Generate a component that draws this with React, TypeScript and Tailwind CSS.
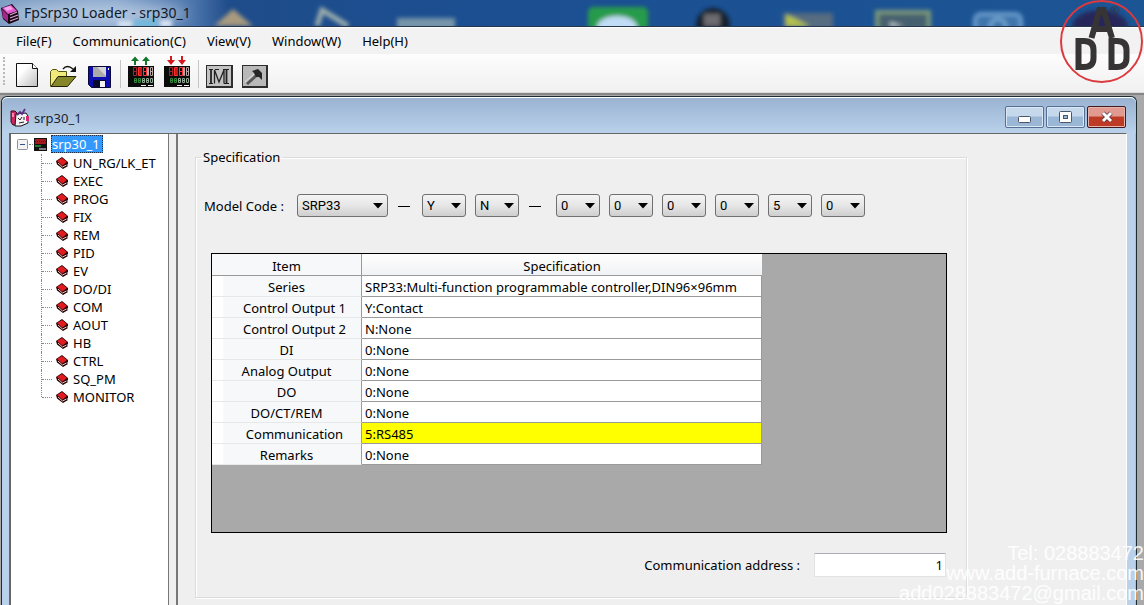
import { ReactNode } from "react";

const menus = ["File(F)", "Communication(C)", "View(V)", "Window(W)", "Help(H)"];

const treeItems = [
  "UN_RG/LK_ET", "EXEC", "PROG", "FIX", "REM", "PID", "EV",
  "DO/DI", "COM", "AOUT", "HB", "CTRL", "SQ_PM", "MONITOR",
];

const rows = [
  { item: "Series", value: "SRP33:Multi-function programmable controller,DIN96×96mm" },
  { item: "Control Output 1", value: "Y:Contact", indent: true },
  { item: "Control Output 2", value: "N:None", indent: true },
  { item: "DI", value: "0:None" },
  { item: "Analog Output", value: "0:None" },
  { item: "DO", value: "0:None" },
  { item: "DO/CT/REM", value: "0:None" },
  { item: "Communication", value: "5:RS485", indent: true, marked: true },
  { item: "Remarks", value: "0:None" },
];

function AppIcon() {
  return (
    <svg width="20" height="22" viewBox="0 0 20 22" className="shrink-0">
      <path d="M1 6 L12 2 L18 9 L19 18 L9 22 L3 17Z" fill="#160713" />
      <path d="M2 6 L11 3 L17 9 L8 12Z" fill="#e45bd0" />
      <path d="M4 6 L10 4 L13 7 L7 9Z" fill="#f7a5ea" />
      <path d="M2 7 L8 13 L8 20 L3 16Z" fill="#a4258c" />
      <path d="M10 13l7-3M10 16l8-3M10 19l8-3" stroke="#d9a7d4" strokeWidth="1.2" />
    </svg>
  );
}

function DesktopBackdrop() {
  return (
    <svg className="absolute inset-0 h-full w-full" viewBox="0 0 1144 26" preserveAspectRatio="xMinYMin slice">
      <defs>
        <linearGradient id="sky" x1="0" x2="1" y1="0" y2="0">
          <stop offset="0" stopColor="#7d9cc2" />
          <stop offset="0.1" stopColor="#86a5cb" />
          <stop offset="0.17" stopColor="#4b74ab" />
          <stop offset="0.2" stopColor="#1f4c8a" />
          <stop offset="0.45" stopColor="#1b4f92" />
          <stop offset="1" stopColor="#1c5594" />
        </linearGradient>
        <filter id="soft" x="-20%" y="-50%" width="140%" height="200%">
          <feGaussianBlur stdDeviation="2" />
        </filter>
        <filter id="glow" x="-20%" y="-100%" width="140%" height="300%">
          <feGaussianBlur stdDeviation="7" />
        </filter>
      </defs>
      <rect width="1144" height="26" fill="url(#sky)" />
      <ellipse cx="95" cy="14" rx="92" ry="10" fill="#c4d4e8" opacity="0.75" filter="url(#glow)" />
      <g filter="url(#soft)">
        <path d="M134 20h24v8h-24z" fill="#72b9dc" />
        <path d="M118 21h14v6h-14zM160 20h12v7h-12z" fill="#dce8f4" />
        <path d="M214 26l19-17 20 17z" fill="#a79a7e" />
        <path d="M317 26l5-16 26 16" fill="none" stroke="#9eb0ad" strokeWidth="5" />
        <rect x="397" y="18" width="58" height="12" fill="#7795a9" />
        <rect x="588" y="7" width="60" height="24" rx="5" fill="#259b4b" />
        <ellipse cx="617" cy="27" rx="20" ry="11" fill="#c1dcf5" />
        <circle cx="713" cy="25" r="17" fill="#15202f" />
        <path d="M704 14h16v12h-16z" fill="#6d6c70" />
        <rect x="783" y="13" width="50" height="16" fill="#566c80" />
        <path d="M786 14l24 12h-24z" fill="#b4c24a" />
        <rect x="877" y="12" width="52" height="20" fill="#46606f" stroke="#7d9a7c" strokeWidth="4" />
        <path d="M890 22l14 4h-14z" fill="#c2ccd0" />
        <rect x="975" y="14" width="46" height="22" rx="6" fill="#3d74ac" stroke="#6b9ccb" strokeWidth="4" />
        <circle cx="998" cy="27" r="8" fill="none" stroke="#7caad4" strokeWidth="3" />
        <ellipse cx="1100" cy="27" rx="28" ry="17" fill="#26285a" />
      </g>
    </svg>
  );
}

function NewIcon() {
  return (
    <svg width="24" height="26" viewBox="0 0 24 26">
      <defs>
        <linearGradient id="page" x1="0" x2="1" y1="0" y2="1">
          <stop offset="0.3" stopColor="#fff" />
          <stop offset="1" stopColor="#bdbdbd" />
        </linearGradient>
      </defs>
      <path d="M1.500 1.500H17.500L22.500 6.500V24.500H1.500Z" fill="url(#page)" stroke="#111" />
      <path d="M17.500 1.500V6.500H22.500" fill="#fff" stroke="#111" />
    </svg>
  );
}

function OpenIcon() {
  return (
    <svg width="28" height="24" viewBox="0 0 28 24">
      <path d="M1.500 22.500V7.500L3.500 5.500H7.500L9.500 7.500H17.500V12.500" fill="#f0ea7c" stroke="#55550f" />
      <path d="M2 22.500L9 12.500H27L18.500 22.500Z" fill="#86862a" stroke="#222208" />
      <path d="M14 5Q18 0 24 5" fill="none" stroke="#111" strokeWidth="1.300" />
      <path d="M27 2V8H21Z" fill="#111" />
    </svg>
  );
}

function SaveIcon() {
  return (
    <svg width="23" height="22" viewBox="0 0 23 22">
      <path d="M0.500 0.500H22.500V21.500H3.500L0.500 18.500Z" fill="#0d0db0" stroke="#08083c" />
      <rect x="5" y="1" width="13" height="10" fill="#a9a9a9" />
      <path d="M9 1h9v9z" fill="#d4d4d4" />
      <rect x="5" y="14" width="13" height="8" fill="#0a0a2c" />
      <rect x="12" y="15" width="5" height="6" fill="#f2f2f2" />
      <path d="M20 2h1v2h-1z" fill="#fff" />
    </svg>
  );
}

function Digits({ x, y, color }: { x: number; y: number; color: string }) {
  return <path d={`M${x} ${y}h3v8h-3zM${x} ${y + 4}h3`} fill="none" stroke={color} />;
}

function DeviceIcon({ up }: { up: boolean }) {
  const arrow = up ? "M0 5L4 0.500L8 5H5V9H3V5Z" : "M3 0H5V4H8L4 9L0 4H3Z";
  return (
    <svg width="27" height="32" viewBox="0 0 27 32">
      <path d={arrow} transform="translate(3 0)" fill={up ? "#11772b" : "#d6171f"} />
      <path d={arrow} transform="translate(14 0)" fill={up ? "#11772b" : "#d6171f"} />
      <rect y="10" width="26" height="21" fill="#0b0b0b" />
      <Digits x={5.5} y={11.5} color="#a3262a" />
      <Digits x={10.5} y={11.5} color="#ff3434" />
      <Digits x={15.5} y={11.5} color="#ff3434" />
      <path d="M11 12h3v7h-3z" fill="#c8161a" />
      <path d="M19.500 11.500h1v8h-1zM22.500 11.500h2v8h-2zM22.500 15.500h2" fill="none" stroke="#b9a6a6" />
      <path d="M6.500 22.500h2v4h-2zM6.500 24.500h2M10.500 22.500h2v4h-2zM10.500 24.500h2" fill="none" stroke="#2d8a3b" />
      <path d="M14.500 22.500h2v4h-2zM14.500 24.500h2M18.500 22.500h2v4h-2zM18.500 24.500h2M22.500 22.500h2v4h-2z" fill="none" stroke="#8fa893" />
      <path d="M13 29.500h5M20 29.500h5" stroke="#eee" />
    </svg>
  );
}

function MonitorIcon() {
  return (
    <svg width="27" height="23" viewBox="0 0 27 23">
      <rect width="27" height="23" fill="#2e2e2e" />
      <rect x="1" y="1" width="24" height="20" fill="#c3c3c3" />
      <path d="M3 4.500h4M9 4.500h4M17 4.500h6M3 18.500h4M18 18.500h5" stroke="#222" />
      <path d="M5 4V18.500M20.500 4V18.500" stroke="#222" strokeWidth="1.800" />
      <path d="M8.500 18.500V5L13 17L18 5V18.500" fill="none" stroke="#222" strokeWidth="1.300" />
    </svg>
  );
}

function ToolIcon() {
  return (
    <svg width="26" height="23" viewBox="0 0 26 23">
      <rect width="26" height="23" fill="#2e2e2e" />
      <rect x="1" y="1" width="23" height="20" fill="#b9b9b9" />
      <path d="M4 18L14 9L16 11L6 20Z" fill="#555" />
      <path d="M10 6L16 4L20 8V15L17 12L14 12L12 8Z" fill="#262626" />
      <path d="M3 17L12 9" stroke="#e4e4e4" />
    </svg>
  );
}

function DocIcon() {
  return (
    <svg width="20" height="20" viewBox="0 0 20 20" className="shrink-0">
      <path d="M1 3H5L7 5V17L3 17L1 14Z" fill="#cf2560" stroke="#3a0b1b" />
      <path d="M6 6L16 5L18 8V15L11 18L5 18Z" fill="#f4f1f4" stroke="#151015" />
      <path d="M7 7L10 4L12 6L15 1" fill="none" stroke="#5c2c86" strokeWidth="1.800" />
      <path d="M8 10l2 2 2-3M9 15l5-1M14 9v3" stroke="#222" fill="none" />
      <path d="M16 8h3v5h-3z" fill="#d62a78" />
      <path d="M2 5h2v4H2z" fill="#f08ab0" />
    </svg>
  );
}

function BookIcon() {
  return (
    <svg width="13" height="12" viewBox="0 0 13 12" className="shrink-0">
      <path d="M0 4L6 0L12 5V7L11 8L12 9L7 12L1 7.500Z" fill="#250505" />
      <path d="M1 4L6 1L11 5L6.500 8.500Z" fill="#e01c21" />
      <path d="M2 6L6.500 10L10.500 8" fill="none" stroke="#f2c4c4" />
    </svg>
  );
}

function TreeDeviceIcon() {
  return (
    <svg width="13" height="13" viewBox="0 0 13 13" className="shrink-0">
      <rect width="13" height="13" fill="#111" />
      <rect x="1" y="1" width="11" height="5" fill="#a51a1c" />
      <path d="M1 3.500h11" stroke="#5a0c0c" strokeDasharray="1 1" />
      <path d="M1 8h6" stroke="#1c7a2c" strokeWidth="2" />
      <path d="M5 11h7" stroke="#eee" />
    </svg>
  );
}

function CodeSelect({ id, label, value, className }: { id: string; label?: string; value: string; className: string }) {
  return (
    <div className={`relative h-[23px] shrink-0 ${className}`}>
      <select
        id={id}
        aria-label={label}
        defaultValue={value}
        className="h-full w-full appearance-none rounded-[3px] border border-[#707070] bg-linear-to-b from-[#f4f4f4] via-[#e6e6e6] to-[#cfcfcf] pl-1 font-[Roboto,sans-serif] text-[13px] leading-5 text-black"
      >
        <option>{value}</option>
      </select>
      <svg width="10" height="6" viewBox="0 0 10 6" className="pointer-events-none absolute top-[9px] right-[5px]">
        <path d="M0 0H10L5 5.500Z" fill="#000" />
      </svg>
    </div>
  );
}

function ToolButton({ label, children }: { label: string; children: ReactNode }) {
  return (
    <button aria-label={label} className="flex w-9 items-end justify-center">
      {children}
    </button>
  );
}

function Dash() {
  return <span className="mt-px mr-3 ml-[10px] h-px w-3 shrink-0 bg-black" />;
}

function CompanyMark() {
  return (
    <svg width="84" height="84" viewBox="0 0 84 84" className="absolute top-0 right-0">
      <circle cx="41.500" cy="41.500" r="40.500" fill="none" stroke="#dc3a3e" strokeWidth="2" />
      <g fill="none" stroke="#373435" strokeWidth="6">
        <path d="M31.500 38L39.500 10H43.500L52 38M34 29H49" />
        <path d="M18.500 41V67H24Q33.500 67 33.500 58V50Q33.500 41 24 41Z" />
        <path d="M51.500 41V67H57Q66.500 67 66.500 58V50Q66.500 41 57 41Z" />
      </g>
      <circle cx="54.500" cy="10.500" r="4" fill="none" stroke="#373435" strokeWidth="0.800" />
      <path d="M53.300 13V8.300H55Q56.500 9.500 55 10.600H53.300M55 10.600L56.300 13" fill="none" stroke="#373435" strokeWidth="0.800" />
    </svg>
  );
}

export default function App() {
  return (
    <div className="relative flex h-screen flex-col overflow-hidden bg-[#a9a9a9] font-['Noto_Sans',sans-serif] text-[13px] leading-[18px] text-black">
      <header className="relative flex h-[27px] shrink-0 items-center border-b border-[#26364b]">
        <DesktopBackdrop />
        <h1 className="relative flex items-center gap-1 text-[14px] text-[#101a28]">
          <AppIcon />
          FpSrp30 Loader - srp30_1
        </h1>
      </header>

      <nav className="flex h-[27px] shrink-0 items-center gap-[21px] border-t border-white bg-[#f2f2f2] pl-4">
        {menus.map((m) => (
          <button key={m} className="whitespace-nowrap">{m}</button>
        ))}
      </nav>

      <div className="flex h-[39px] shrink-0 items-end border-b border-[#dcdcdc] bg-linear-to-b from-[#fdfdfd] to-[#f0f0f0] pb-1 pl-[3px]">
        <span className="mr-1 h-7 self-center border-l-2 border-dotted border-[#b9b9b9]" />
        <ToolButton label="New"><NewIcon /></ToolButton>
        <ToolButton label="Open"><OpenIcon /></ToolButton>
        <ToolButton label="Save"><SaveIcon /></ToolButton>
        <span className="mr-[2px] ml-[3px] h-7 w-px bg-[#c5c5c5]" />
        <ToolButton label="Upload"><DeviceIcon up /></ToolButton>
        <ToolButton label="Download"><DeviceIcon up={false} /></ToolButton>
        <span className="mr-[2px] ml-[3px] h-7 w-px bg-[#c5c5c5]" />
        <ToolButton label="Monitor"><MonitorIcon /></ToolButton>
        <ToolButton label="Tools"><ToolIcon /></ToolButton>
      </div>

      <div className="flex min-h-0 flex-1 border-t-2 border-[#858585] pt-px pr-[7px] pl-px">
        <section className="flex min-w-0 flex-1 flex-col rounded-t-md border border-b-0 border-[#1d2c33] bg-[#b9d1ea]">
          <div className="flex h-[36px] shrink-0 items-center gap-1 rounded-t-md border-t border-white bg-linear-to-b from-[#9ab3d1] to-[#b9d1ea] pt-[5px] pr-[10px] pl-2">
            <DocIcon />
            <h2 className="flex-1 text-[#1a2530]">srp30_1</h2>
            <div className="flex gap-[2px] pb-[2px]">
              <button aria-label="Minimize" className="flex h-[22px] w-[39px] items-center justify-center rounded-[2px] border border-[#566f94] bg-linear-to-b from-[#c6d8ec] from-45% to-[#9ab7d6] to-50% shadow-[inset_0_0_0_1px_#dbe7f4]">
                <svg width="13" height="7" viewBox="0 0 13 7" className="mt-1"><rect x="0.500" y="0.500" width="12" height="6" rx="1" fill="#fff" stroke="#4a5568" /></svg>
              </button>
              <button aria-label="Maximize" className="flex h-[22px] w-[39px] items-center justify-center rounded-[2px] border border-[#566f94] bg-linear-to-b from-[#c6d8ec] from-45% to-[#9ab7d6] to-50% shadow-[inset_0_0_0_1px_#dbe7f4]">
                <svg width="13" height="12" viewBox="0 0 13 12"><rect x="0.500" y="0.500" width="12" height="11" rx="1" fill="#fff" stroke="#4a5568" /><rect x="4.500" y="4.500" width="4" height="3" fill="#9ab7d6" stroke="#4a5568" /></svg>
              </button>
              <button aria-label="Close" className="flex h-[22px] w-[39px] items-center justify-center rounded-[2px] border border-[#431a20] bg-linear-to-b from-[#e09a8f] from-45% to-[#bd3a25] to-50% shadow-[inset_0_0_0_1px_#e7b3aa]">
                <svg width="14" height="12" viewBox="0 0 14 12"><path d="M3 2L11 10M11 2L3 10" stroke="#5a2f33" strokeWidth="4.500" /><path d="M3 2L11 10M11 2L3 10" stroke="#fff" strokeWidth="3" /></svg>
              </button>
            </div>
          </div>

          <div className="flex min-h-0 flex-1 border-r border-[#7fd0ee] pr-2 pl-[7px]">
            <div className="flex min-h-0 flex-1 border-t border-r border-l-2 border-[#666] border-r-white bg-[#efefef]">
              <aside className="w-[158px] shrink-0 border-r border-[#777] bg-white pl-1">
                <div className="flex h-5 items-center pl-[2px]">
                  <svg width="11" height="11" viewBox="0 0 11 11"><rect x="0.500" y="0.500" width="10" height="10" rx="1" fill="#f4f4f4" stroke="#919191" /><path d="M3 5.500h5" stroke="#33508f" /></svg>
                  <span className="mx-px w-1 border-t border-dotted border-[#888]" />
                  <TreeDeviceIcon />
                  <span className="ml-1 h-[18px] border border-dotted border-[#1b2f4a] bg-[#3399ff] pr-[2px] leading-4 text-white">srp30_1</span>
                </div>
                <ul className="flex flex-col">
                  {treeItems.map((t, i) => (
                    <li key={t} className="flex h-[18px] items-center pl-[26px]">
                      <span className={`${i === treeItems.length - 1 ? "h-[9px] self-start" : "h-[18px]"} border-l border-dotted border-[#888]`} />
                      <span className="mr-[4px] w-[10px] border-t border-dotted border-[#888]" />
                      <BookIcon />
                      <span className="ml-1">{t}</span>
                    </li>
                  ))}
                </ul>
              </aside>

              <main className="ml-[7px] min-w-0 flex-1 border-l-2 border-[#777] pt-[14px] pr-[159px] pl-[17px]">
                <fieldset className="h-[450px] min-w-0 border border-[#dcdcdc] pl-[15px] shadow-[inset_1px_1px_0_#fff,1px_1px_0_#fff]">
                  <legend className="-ml-[10px] px-[2px]">Specification</legend>

                  <div className="mt-[28px] -ml-[7px] flex items-center">
                    <label htmlFor="model" className="w-[93px] shrink-0 whitespace-nowrap">Model Code :</label>
                    <CodeSelect id="model" value="SRP33" className="w-[91px]" />
                    <Dash />
                    <div className="flex gap-[9px]">
                      <CodeSelect id="c1" label="Control output 1" value="Y" className="w-[44px]" />
                      <CodeSelect id="c2" label="Control output 2" value="N" className="w-[44px]" />
                    </div>
                    <Dash />
                    <div className="ml-[3px] flex gap-[9px]">
                      <CodeSelect id="c3" label="DI" value="0" className="w-[44px]" />
                      <CodeSelect id="c4" label="Analog output" value="0" className="w-[44px]" />
                      <CodeSelect id="c5" label="DO" value="0" className="w-[44px]" />
                      <CodeSelect id="c6" label="DO/CT/REM" value="0" className="w-[44px]" />
                      <CodeSelect id="c7" label="Communication" value="5" className="w-[44px]" />
                      <CodeSelect id="c8" label="Remarks" value="0" className="w-[44px]" />
                    </div>
                  </div>

                  <div className="mt-[36px] mr-[19px] h-[280px] border border-black bg-[#a9a9a9]">
                    <table className="w-[550px] table-fixed border-separate border-spacing-0 bg-white">
                      <colgroup>
                        <col className="w-[150px]" />
                        <col />
                      </colgroup>
                      <thead>
                        <tr className="h-[22px]">
                          <th className="border-r border-b border-[#9a9a9a] bg-[#f7f8fa] p-0 pt-[2px] font-normal">Item</th>
                          <th className="border-b border-[#9a9a9a] bg-linear-to-b from-white to-[#f1f2f4] p-0 pt-[2px] font-normal">Specification</th>
                        </tr>
                      </thead>
                      <tbody>
                        {rows.map((r) => (
                          <tr key={r.item} className="h-[21px]">
                            <th scope="row" className={`border-r border-b border-r-[#9a9a9a] border-b-[#e6e8ea] bg-linear-to-r from-white from-7% to-[#f6f8fa] to-8% p-0 pt-[2px] font-normal ${r.indent ? "pl-4" : ""}`}>{r.item}</th>
                            <td className={`border-r border-b border-[#9a9a9a] p-0 pt-[2px] pl-[3px] whitespace-nowrap ${r.marked ? "bg-[#ffff00]" : ""}`}>{r.value}</td>
                          </tr>
                        ))}
                      </tbody>
                    </table>
                  </div>

                  <div className="mt-[20px] mr-[20px] flex items-center justify-end gap-[14px]">
                    <label htmlFor="address">Communication address :</label>
                    <input id="address" defaultValue="1" className="h-6 w-[132px] border border-t-[#abadb3] border-r-[#e3e3e3] border-b-[#e3e3e3] border-l-[#e3e3e3] bg-white pr-[2px] text-right" />
                  </div>
                </fieldset>
              </main>
            </div>
          </div>
        </section>
      </div>

      <CompanyMark />
      <div className="pointer-events-none absolute right-0 bottom-[2px] text-right font-['Liberation_Sans',sans-serif] text-[20px] leading-5 whitespace-nowrap text-white/90">
        <p>Tel: 028883472</p>
        <p>www.add-furnace.com</p>
        <p>add028883472@gmail.com</p>
      </div>
    </div>
  );
}
